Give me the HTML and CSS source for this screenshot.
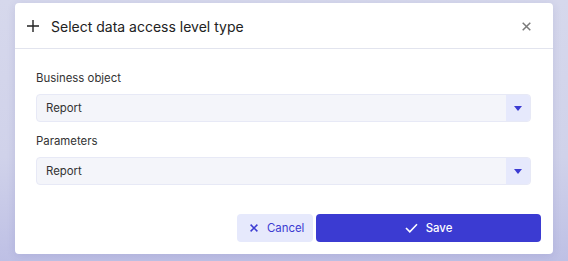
FILE: index.html
```html
<!DOCTYPE html>
<html lang="en">
<head>
  <meta charset="UTF-8" />
  <title>Select data access level type</title>
  <link rel="stylesheet" href="styles.css">
</head>
<body>

  <div class="dialog">
    <header class="dialog-header">
      <svg class="plus-icon" width="12" height="12" viewBox="0 0 12 12">
        <path d="M6 0v12M0 6h12" stroke="#222" stroke-width="1.4" fill="none"/>
      </svg>
      <h1>Select data access level type</h1>
      <svg class="close-icon" width="9" height="9" viewBox="0 0 9 9">
        <path d="M0.7 0.7l7.6 7.6M8.3 0.7l-7.6 7.6" stroke="#7a7a7a" stroke-width="1.5" fill="none"/>
      </svg>
    </header>

    <div class="dialog-body">
      <div class="field">
        <label>Business object</label>
        <div class="select">
          <span class="value">Report</span>
          <span class="arrow"></span>
        </div>
      </div>
      <div class="field">
        <label>Parameters</label>
        <div class="select">
          <span class="value">Report</span>
          <span class="arrow"></span>
        </div>
      </div>
    </div>

    <footer class="dialog-footer">
      <button class="btn btn-cancel">
        <svg width="8" height="8" viewBox="0 0 8 8">
          <path d="M0.6 0.6l6.8 6.8M7.4 0.6l-6.8 6.8" stroke="#3b3bd2" stroke-width="1.5" fill="none"/>
        </svg>
        Cancel
      </button>
      <button class="btn btn-save">
        <svg width="13" height="10" viewBox="0 0 13 10">
          <path d="M1 5l3.8 3.8L12 1.2" stroke="#fff" stroke-width="1.6" fill="none"/>
        </svg>
        Save
      </button>
    </footer>
  </div>

</body>
</html>
```

FILE: styles.css
```css
* {
  margin: 0;
  padding: 0;
  box-sizing: border-box;
}

body {
  font-family: 'Inter', 'Liberation Sans', sans-serif;
  background: linear-gradient(to bottom, #d6d8ec 0%, #d0d2ea 60%, #bec0e5 100%);
  color: #222;
  height: 261px;
  padding: 3px 15px 0;
  overflow: hidden;
}

.dialog {
  width: 538px;
  height: 251px;
  background: #fff;
  border-radius: 4px;
  box-shadow: 0 2px 8px rgba(60, 60, 140, 0.12);
  display: flex;
  flex-direction: column;
}

.dialog-header {
  height: 46px;
  display: flex;
  align-items: center;
  padding: 0 22px 0 12px;
  border-bottom: 1px solid #e2e4ee;
}

.plus-icon {
  margin-right: 12px;
}

.dialog-header h1 {
  flex: 1;
  font-size: 14px;
  font-weight: 400;
  color: #222;
  margin-top: 1px;
}

.close-icon {
  margin-top: 1px;
}

.dialog-body {
  padding: 22px 22px 0 21px;
}

.field {
  margin-bottom: 12px;
}

.field label {
  display: block;
  font-size: 11.4px;
  line-height: 14px;
  color: #333;
  margin-bottom: 9px;
}

.select {
  display: flex;
  height: 28px;
  background: #f4f5fa;
  border: 1px solid #e7e9f6;
  border-radius: 4px;
  overflow: hidden;
}

.select .value {
  flex: 1;
  font-size: 11.4px;
  line-height: 26px;
  color: #333;
  padding-left: 9px;
}

.select .arrow {
  width: 24px;
  background: #e6e9fc;
  display: flex;
  align-items: center;
  justify-content: center;
}

.select .arrow::after {
  content: "";
  border-left: 4px solid transparent;
  border-right: 4px solid transparent;
  border-top: 5px solid #3b3bd2;
  margin-top: 1px;
}

.dialog-footer {
  margin-top: auto;
  display: flex;
  justify-content: flex-end;
  gap: 3px;
  padding: 0 12px 12px;
}

.btn {
  height: 28px;
  border: none;
  border-radius: 4px;
  font-family: 'Inter', 'Liberation Sans', sans-serif;
  font-size: 11.4px;
  display: flex;
  align-items: center;
  cursor: pointer;
}

.btn-cancel {
  width: 76px;
  padding-left: 13px;
  gap: 9px;
  background: #e6e9fc;
  color: #3b3bd2;
}

.btn-save {
  width: 225px;
  justify-content: center;
  gap: 8px;
  background: #3b3bd2;
  color: #fff;
  font-weight: 500;
}
```
